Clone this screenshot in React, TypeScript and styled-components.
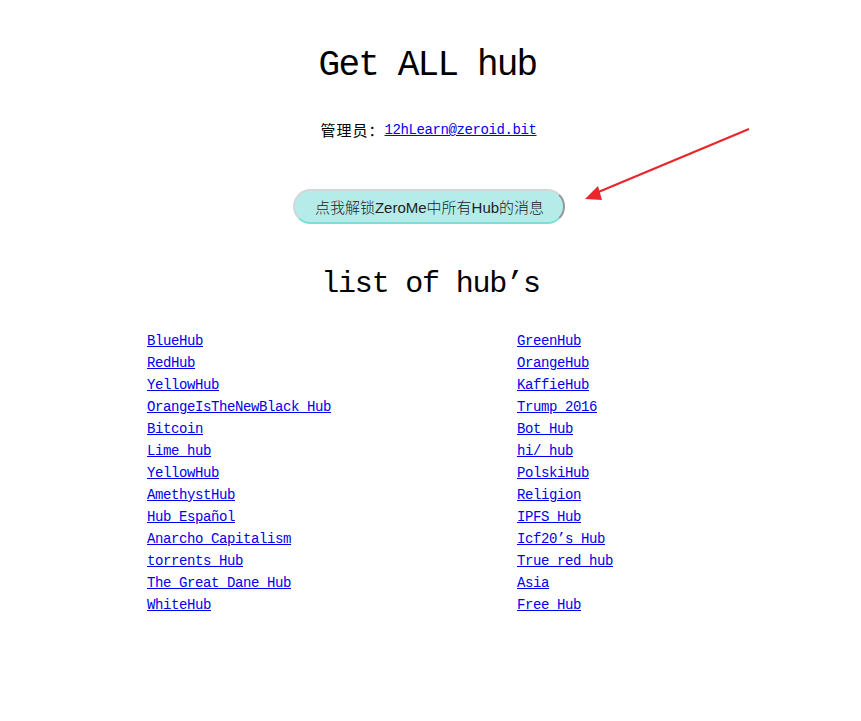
import React from "react";
import styled, { createGlobalStyle } from "styled-components";

const Global = createGlobalStyle`
  html, body { margin: 0; padding: 0; background: #fff; }
  body { font-family: "Liberation Mono", "Noto Sans CJK SC", monospace; color: #000; }
`;

const Page = styled.div`
  position: relative;
  width: 861px;
  min-height: 721px;
  padding-top: 41px;
  box-sizing: border-box;
  display: flex;
  flex-direction: column;
  align-items: center;
`;

const Title = styled.h1`
  margin: 0 6px 0 0;
  height: 50px;
  line-height: 50px;
  font-family: "Liberation Mono", monospace;
  font-size: 36px;
  letter-spacing: -1.8px;
  font-weight: normal;
  color: #000;
`;

const AdminLine = styled.p`
  margin: 28px 4px 0 0;
  line-height: 22px;
  height: 22px;
  font-size: 16px;
  display: flex;
  align-items: center;
`;

const CjkLabel = styled.span`
  font-family: "Noto Sans CJK SC", sans-serif;
  font-size: 15px;
  letter-spacing: 1px;
`;

const MonoLink = styled.a`
  font-family: "Liberation Mono", monospace;
  font-size: 14px;
  letter-spacing: -0.4px;
  color: #0000ee;
  text-decoration: underline;
`;

const UnlockButton = styled.button`
  margin: 48px 4px 0 0;
  height: 35px;
  width: 272px;
  padding: 0 12px 0 14px;
  border-radius: 18px;
  background: #b5ecea;
  border: 2px solid #d6d6d6;
  border-right-color: #8d9a99;
  border-bottom-color: #78e0d6;
  font-family: "Liberation Sans", "Noto Sans CJK SC", sans-serif;
  font-size: 15px;
  font-weight: 300;
  color: #222;
  cursor: pointer;
  box-sizing: border-box;
  white-space: nowrap;
`;

const SubTitle = styled.h2`
  margin: 40px 0 0;
  height: 40px;
  line-height: 40px;
  font-family: "Liberation Mono", monospace;
  font-size: 30px;
  letter-spacing: -1.2px;
  font-weight: normal;
`;

const Lists = styled.div`
  align-self: stretch;
  margin-top: 26px;
  padding-left: 147px;
  display: grid;
  grid-template-columns: 370px 1fr;
`;

const HubList = styled.ul`
  list-style: none;
  margin: 0;
  padding: 0;
`;

const HubItem = styled.li`
  line-height: 22px;
  height: 22px;
`;

const ArrowLayer = styled.svg`
  position: absolute;
  left: 580px;
  top: 120px;
`;

const left = [
  "BlueHub",
  "RedHub",
  "YellowHub",
  "OrangeIsTheNewBlack Hub",
  "Bitcoin",
  "Lime hub",
  "YellowHub",
  "AmethystHub",
  "Hub Español",
  "Anarcho Capitalism",
  "torrents Hub",
  "The Great Dane Hub",
  "WhiteHub",
];

const right = [
  "GreenHub",
  "OrangeHub",
  "KaffieHub",
  "Trump 2016",
  "Bot Hub",
  "hi/ hub",
  "PolskiHub",
  "Religion",
  "IPFS Hub",
  "Icf20’s Hub",
  "True red hub",
  "Asia",
  "Free Hub",
];

export default function App() {
  return (
    <>
      <Global />
      <Page>
        <Title>Get ALL hub</Title>
        <AdminLine>
          <CjkLabel>管理员：</CjkLabel>
          <MonoLink href="#">12hLearn@zeroid.bit</MonoLink>
        </AdminLine>
        <UnlockButton>点我解锁ZeroMe中所有Hub的消息</UnlockButton>
        <SubTitle>list of hub’s</SubTitle>
        <Lists>
          <HubList>
            {left.map((h, i) => (
              <HubItem key={i}>
                <MonoLink href="#">{h}</MonoLink>
              </HubItem>
            ))}
          </HubList>
          <HubList>
            {right.map((h, i) => (
              <HubItem key={i}>
                <MonoLink href="#">{h}</MonoLink>
              </HubItem>
            ))}
          </HubList>
        </Lists>
        <ArrowLayer width="180" height="90" viewBox="0 0 180 90">
          <line x1="169" y1="9" x2="16" y2="73" stroke="#e8262b" strokeWidth="2.2" />
          <polygon points="5,79 18,66 22,80" fill="#e8262b" />
        </ArrowLayer>
      </Page>
    </>
  );
}
